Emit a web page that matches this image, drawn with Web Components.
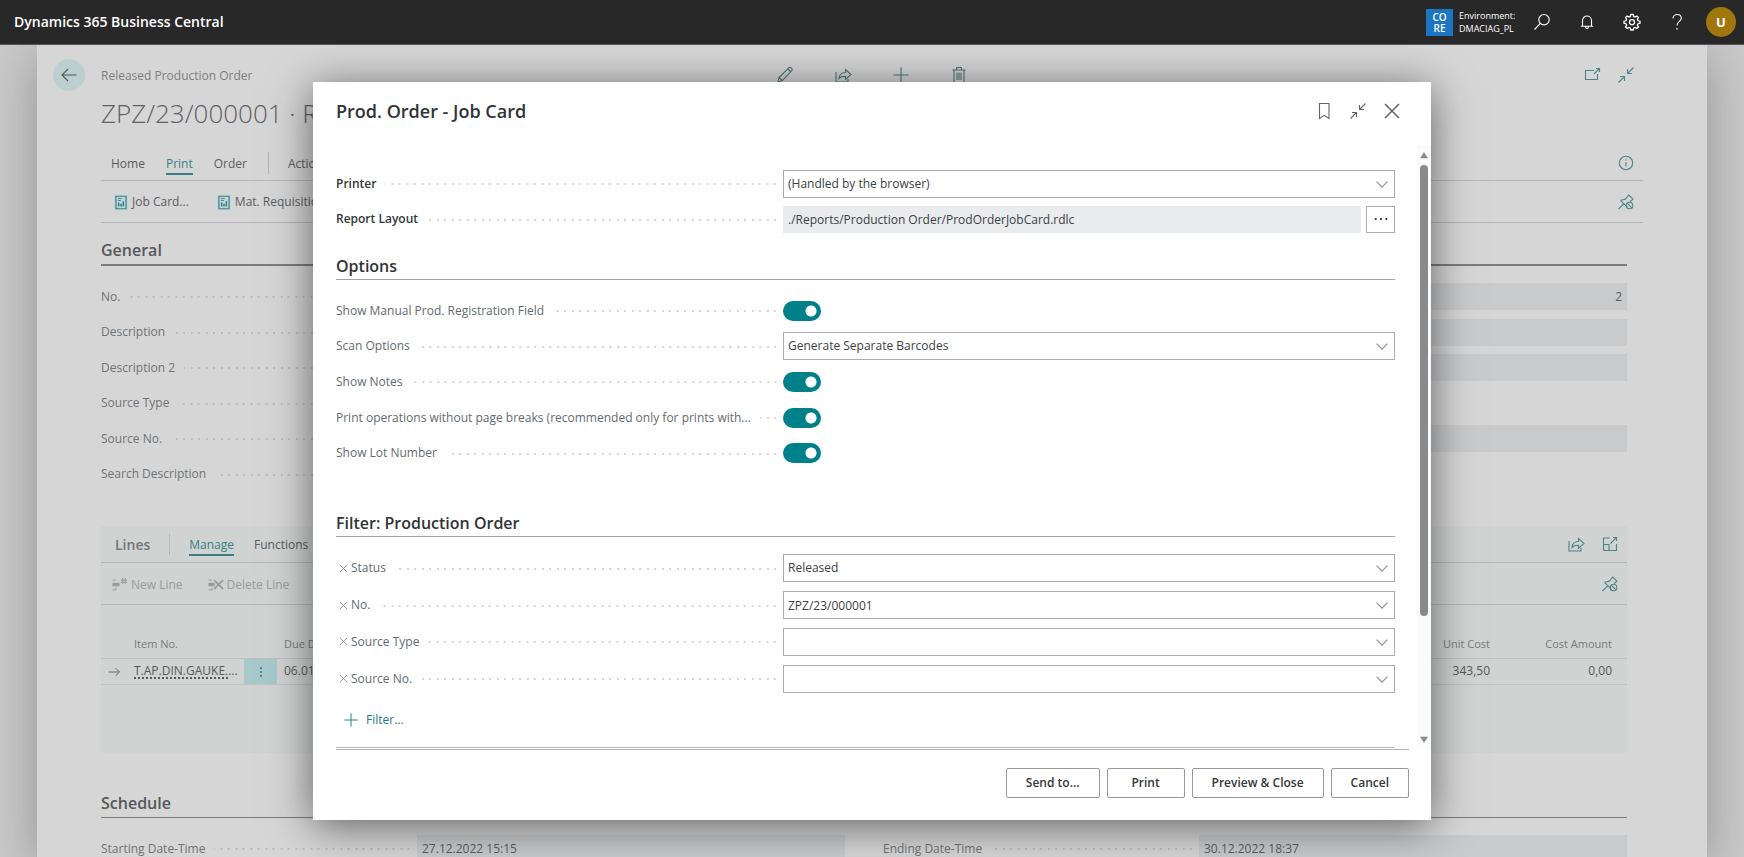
<!DOCTYPE html>
<html lang="en">
<head>
<meta charset="utf-8">
<title>Dynamics 365 Business Central</title>
<style>
html,body{margin:0;height:100%;overflow:hidden}
body{font:12px/18px "Open Sans","Noto Sans",sans-serif;color:#595d5f;background:#cacaca}
</style>
</head>
<body>
<bc-app></bc-app>
<script>
const ICONS = {
  back:'<path d="M16.500 9H2M8 3 2 9l6 6"/>',
  edit:'<path d="M2 16l1-4.500L13 1.700c1.500-1 4 1 3 2.800L6.300 14.600zM3 11.500l3.300 3.100M11.800 3l3.200 3"/>',
  share:'<path d="M2 6v10h12v-3M5 12.500c.3-4 3-6 6.500-6V3.500l5.500 5-5.500 4.800v-3c-3 0-5 .5-6.500 2.200z"/>',
  plus:'<path d="M9 1.500v15M1.500 9h15"/>',
  trash:'<path d="M2.500 4h13M6.500 4V1.500h5V4M4 4v12.500h10V4M7 6.500v7.500M9 6.500v7.500M11 6.500v7.500"/>',
  popout:'<path d="M11 4.500H2.500v9h12V8M11 8l5.500-5.500M13 2.500h3.500V6"/>',
  collapse:'<path d="M16.500 1.500 10.500 7.500M10.500 3v4.500H15M1.500 16.500l6-6M3 10.500h4.500V15"/>',
  info:'<circle cx="9" cy="9" r="6.700"/><path d="M9 8v4.500M9 5.300v1.200"/>',
  unpin:'<path d="M1.500 16 7 10.700M3.500 7.300l7 7M3.500 7.300c2-.8 4-.5 5-1.300l3.300-4 4.200 4.200-3 2.300"/><circle cx="12.500" cy="12.500" r="3.300"/><path d="m10.300 10.300 4.400 4.400"/>',
  expand:'<path d="M9 3H2.500v12.500h13V9M2.500 9.500H8v6M9.500 8.500l6-6M12 2.500h3.500V6"/>',
  search:'<circle cx="11" cy="6.700" r="5.200"/><path d="M7.300 10.400 1.500 16.500"/>',
  bell:'<path d="M4.500 13V7.500a4.500 4.500 0 0 1 9 0V13M2.800 13.200h12.400M7.500 13.500a1.500 2 0 0 0 3 0"/>',
  gear:'<path stroke-width="1.300" d="M7.700 1.500h2.600l.4 2 1.400.6L13.800 3l1.700 1.700-1.100 1.700.6 1.400 2 .4v2.100l-2 .4-.6 1.400 1.100 1.700-1.700 1.700-1.700-1.100-1.400.6-.4 2H7.700l-.4-2-1.400-.6-1.700 1.100-1.700-1.700 1.100-1.700-.6-1.400-2-.4V8.200l2-.4.6-1.400-1.100-1.700L4.200 3l1.700 1.100 1.400-.6z"/><circle cx="9" cy="9.200" r="2.500" stroke-width="1.300"/>',
  help:'<path d="M5 5.500C5 3 6.800 1.500 9.200 1.500S13.300 3 13.300 5.300C13.300 8.500 9 8.500 9 12.500M9 15v1.800"/>',
  bookmark:'<path d="M4.500 1.500h9.500v15L9.200 13.300 4.500 16.500z"/>',
  close:'<path stroke-width="1.500" d="m2 2 14 14M16 2 2 16"/>',
  clear:'<path d="m2 2 14 14M16 2 2 16" stroke-width="1.700"/>',
  chevron:'<path d="m2 6 7 7 7-7" stroke-width="1.600"/>',
  dots:'<path d="M2 9h2M8 9h2M14 9h2" stroke-width="2"/>',
  report:'<path d="M2.500 1h13v16h-13z" stroke-width="1.500"/><path d="M6 14V9M9 14v-3.500M12 14V7.500" stroke-width="2"/><path d="M5 4h5M5 6.500h4"/>',
  newline:'<path d="M1 3.500h4M1 14.500h4M5 12v3" /><path d="M1 8.500h8" stroke-width="4"/><path d="M10.500 3.500h7M10.500 6h7M12.500 1v7M15.500 1v7"/>',
  delline:'<path d="M1 3.500h4M1 14.500h4M5 12v3"/><path d="M1 8.500h7" stroke-width="4"/><path d="m7.500 3.500 10 10M17.500 3.500l-10 10" stroke-width="2"/>',
  arrow:'<path d="M2 9h14M11 4l5 5-5 5"/>',
  more:'<path d="M9 3v2M9 8v2M9 13v2" stroke-width="2"/>',
  up:'<path d="M9 3l7 11H2z" fill="currentColor"/>',
  down:'<path d="M9 15l7-11H2z" fill="currentColor"/>'
};

const BASE = `:host,*{box-sizing:border-box}
button,input,select{font:inherit;color:inherit;margin:0;border-radius:0}
button{background:none;border:0;padding:0}
a{color:inherit;text-decoration:none}
h1,h2,p{margin:0}`;

function define(name, html) {
  const template = document.createElement('template');
  customElements.define(name, class extends HTMLElement {
    connectedCallback() {
      if (this.shadowRoot) return;
      template.innerHTML = typeof html === 'function' ? html(this) : html;
      this.attachShadow({mode:'open'}).append(template.content.cloneNode(true));
    }
  });
}

define('bc-icon', el => `<style>:host{display:inline-block;width:18px;height:18px;flex:none}
svg{display:block;width:100%;height:100%;fill:none;stroke:currentColor;stroke-width:1.100}</style>
<svg viewBox="0 0 18 18" aria-hidden="true">${ICONS[el.getAttribute('name')]}</svg>`);

define('bc-icon-button', el => `<style>${BASE}:host{display:block}button{display:flex;color:inherit}</style>
<button type="button" aria-label="${el.getAttribute('label')}"><bc-icon name="${el.getAttribute('name')}"></bc-icon></button>`);

define('bc-topbar', `<style>${BASE}
:host{display:flex;align-items:center;height:45px;background:#282828;border-bottom:1px solid #555;color:#fff;padding:0 8px 0 14px;position:relative;z-index:3}
.brand{font-size:14px;font-weight:600;margin-right:auto}
.badge{width:27px;height:27px;background:#1c75c2;font-size:10px;line-height:11px;font-weight:600;text-align:center;padding-top:3px;margin-right:6px}
.env{font-size:9px;line-height:13px;width:74px}
.icons{display:flex;gap:27px;margin-right:20px}
.user{width:30px;height:30px;border-radius:50%;background:#a0760d;font-size:13px;font-weight:700;text-align:center}
</style>
<a class="brand" href="#">Dynamics 365 Business Central</a>
<div class="badge">CO<br>RE</div>
<div class="env">Environment:<br>DMACIAG_PL</div>
<div class="icons">
<bc-icon-button name="search" label="Search"></bc-icon-button>
<bc-icon-button name="bell" label="Notifications"></bc-icon-button>
<bc-icon-button name="gear" label="Settings"></bc-icon-button>
<bc-icon-button name="help" label="Help"></bc-icon-button>
</div>
<button class="user" type="button">U</button>`);

const DOTS = `.dots{flex:1;min-width:0;height:3px;margin:2px 6px 0 9px;background:
radial-gradient(circle at 6px 1px,var(--dot) 1px,transparent 1px) right top/15px 3px,
radial-gradient(circle at 13px 1px,var(--dot) 1px,transparent 1px) right top/15px 3px}`;

define('bc-page-field', el => {
  const label = el.getAttribute('label') || '', value = el.getAttribute('value');
  return `<style>${BASE}${DOTS}
:host{display:flex;align-items:center;--dot:#bbbdbe}
.caption{display:flex;align-items:center;width:316px;flex:none;color:#6f7375}
input{flex:1;min-width:0;height:27px;border:0;background:#c8cacc;padding:0 5px;color:#5a5d5f;outline:0}
:host([right]) input{text-align:right}
</style>
<div class="caption">${label ? `<label for="f">${label}</label><span class="dots"></span>` : ''}</div>
${value === null ? '' : `<input id="f" readonly value="${value}" ${label ? '' : 'aria-label="Value"'}>`}`;
});

define('bc-section', el => `<style>${BASE}
:host{display:block}
h2{height:var(--head,30px);font-size:16px;line-height:28px;font-weight:600;color:var(--head-ink,#54585a);border-bottom:var(--rule,2px solid #787d82)}
</style><h2>${el.getAttribute('heading')}</h2><slot></slot>`);

define('bc-lines', `<style>${BASE}
:host{display:block;background:#d0d3d2;padding-bottom:68px}
.bar{display:flex;align-items:center;border-bottom:1px solid #b3b8ba;padding-right:8px}
.head{height:37px;padding-left:14px}
.head h2{font-size:14px;font-weight:600;color:#74797a;padding-right:19px;margin-right:19px;line-height:21px;border-right:1px solid #b3b8ba}
.head a{margin-right:20px;padding-top:3px;border-bottom:2px solid transparent}
.head .on{color:#358084;border-bottom-color:#358084}
.acts{height:42px;padding-left:10px;color:#999c9c}
.acts button{display:flex;gap:3px;align-items:center;margin-right:24px;padding-top:2px}
.acts bc-icon{width:17px;height:16px}
.end{margin-left:auto;display:flex;gap:16px;color:#4d8487}
table{width:100%;border-collapse:collapse;table-layout:fixed}
th{height:53px;vertical-align:bottom;padding:0 0 5px;text-align:left;font-weight:400;font-size:11px;color:#777b7c;border-bottom:1px solid #bcc0c1}
td{height:26px;padding:0;border-bottom:1px solid #c0c4c4;color:#55595a;white-space:nowrap}
.n{text-align:right;padding-right:15px}
td.c{text-align:center}
td.m{background:#a7c9cb}
td bc-icon{width:14px;height:14px;vertical-align:middle}
td a{text-decoration:underline dotted 2px;text-underline-offset:2px}
.due{padding-left:7px}
</style>
<div class="bar head"><h2>Lines</h2><a class="on" href="#">Manage</a><a href="#">Functions</a>
<span class="end"><bc-icon-button name="share" label="Share"></bc-icon-button><bc-icon-button name="expand" label="Expand"></bc-icon-button></span></div>
<div class="bar acts"><button type="button" disabled><bc-icon name="newline"></bc-icon>New Line</button><button type="button" disabled><bc-icon name="delline"></bc-icon>Delete Line</button>
<span class="end"><bc-icon-button name="unpin" label="Unpin"></bc-icon-button></span></div>
<table><colgroup><col style="width:33px"><col style="width:110px"><col style="width:33px"><col style="width:120px"><col><col style="width:110px"><col style="width:122px"></colgroup>
<thead><tr><th></th><th>Item No.</th><th></th><th class="due">Due Date</th><th></th><th class="n">Unit Cost</th><th class="n">Cost Amount</th></tr></thead>
<tbody><tr><td><bc-icon name="arrow" style="margin-left:6px"></bc-icon></td><td><a href="#">T.AP.DIN.GAUKE.</a>...</td><td class="c m"><bc-icon name="more"></bc-icon></td><td class="due">06.01.2023</td><td></td><td class="n">343,50</td><td class="n">0,00</td></tr></tbody></table>`);

define('bc-order-page', `<style>${BASE}
:host{display:block;height:100%;margin:0 37px;padding:13px 64px 0;background:#d6d6d6;box-shadow:0 10px 50px rgba(0,0,0,.28);overflow:hidden}
.top{display:grid;grid-template-columns:675fr 867fr;height:34px;align-items:center}
.crumb{display:flex;align-items:center;gap:16px;margin-left:-48px;color:#7b7f81}
.crumb span{padding-top:2px}
.back{width:32px;height:32px;border-radius:50%;background:#bccfd0;display:flex;align-items:center;justify-content:center;color:#555}
.tools{display:flex;gap:40px;color:#4d7578}
.end{margin-left:auto;display:flex;gap:16px;padding-right:8px;color:#4d8487}
h1{font-size:26px;line-height:42px;font-weight:300;color:#5d6163}
.bar{display:flex;align-items:center;border-bottom:1px solid #b5b8ba}
.tabs{height:35px;margin-top:12px;padding-left:10px}
.tabs a{margin-right:21px;padding-top:3px;border-bottom:2px solid transparent}
.tabs .on{color:#358084;border-bottom-color:#358084}
.tabs i{width:1px;height:22px;background:#b3b6b8;margin-right:19px}
.acts{height:42px;padding-left:13px}
.acts button{display:flex;gap:4px;align-items:center;margin-right:28px;padding-top:1px}
.acts button bc-icon{width:14px;height:15px;color:#358084;background:#c3d6d7}
bc-section,bc-lines{margin-right:16px}
.general{margin-top:13px}
.cols{display:grid;grid-template-columns:1fr 1fr;column-gap:38px;margin-top:13px}
.six{grid-template-rows:repeat(6,1fr);height:213px;grid-auto-flow:column}
bc-lines{margin-top:34px}
.sched{margin-top:36px;--head:29px;--rule:1px solid #787d82}
.one bc-page-field{height:36px}
</style>
<div class="top"><div class="crumb"><button class="back" type="button" aria-label="Back"><bc-icon name="back"></bc-icon></button><span>Released Production Order</span></div>
<div class="tools"><bc-icon-button name="edit" label="Edit"></bc-icon-button><bc-icon-button name="share" label="Share"></bc-icon-button><bc-icon-button name="plus" label="New"></bc-icon-button><bc-icon-button name="trash" label="Delete"></bc-icon-button>
<span class="end"><bc-icon-button name="popout" label="Open in new window"></bc-icon-button><bc-icon-button name="collapse" label="Collapse"></bc-icon-button></span></div></div>
<h1>ZPZ/23/000001 · R</h1>
<nav class="bar tabs"><a href="#">Home</a><a class="on" href="#">Print</a><a href="#">Order</a><i></i><a href="#">Actions</a><span class="end"><bc-icon-button name="info" label="Details"></bc-icon-button></span></nav>
<div class="bar acts"><button type="button"><bc-icon name="report"></bc-icon>Job Card...</button><button type="button"><bc-icon name="report"></bc-icon>Mat. Requisition...</button><span class="end"><bc-icon-button name="unpin" label="Unpin"></bc-icon-button></span></div>
<bc-section class="general" heading="General"><div class="cols six">
<bc-page-field label="No." value=""></bc-page-field><bc-page-field label="Description" value=""></bc-page-field><bc-page-field label="Description 2" value=""></bc-page-field><bc-page-field label="Source Type" value=""></bc-page-field><bc-page-field label="Source No." value=""></bc-page-field><bc-page-field label="Search Description" value=""></bc-page-field>
<bc-page-field right value="2"></bc-page-field><bc-page-field value=""></bc-page-field><bc-page-field value=""></bc-page-field><bc-page-field></bc-page-field><bc-page-field value=""></bc-page-field><bc-page-field></bc-page-field>
</div></bc-section>
<bc-lines></bc-lines>
<bc-section class="sched" heading="Schedule"><div class="cols one"><bc-page-field label="Starting Date-Time" value="27.12.2022 15:15"></bc-page-field><bc-page-field label="Ending Date-Time" value="30.12.2022 18:37"></bc-page-field></div></bc-section>`);

define('bc-dialog-field', el => {
  const a = n => el.getAttribute(n) || '', kind = a('kind'), v = a('value');
  const control = {
    select:`<span class="box"><select id="f"><option>${v}</option></select><bc-icon name="chevron"></bc-icon></span>`,
    lookup:`<span class="box"><input id="f" type="text" value="${v}"><bc-icon name="chevron"></bc-icon></span>`,
    layout:`<input id="f" class="ro" readonly value="${v}"><button class="pick" type="button" aria-label="Choose layout"><bc-icon name="dots"></bc-icon></button>`,
    toggle:`<input id="f" type="checkbox" role="switch" checked>`
  }[kind];
  return `<style>${BASE}${DOTS}
:host{display:flex;align-items:center;--dot:#d3d5d6}
.caption{display:flex;align-items:center;width:447px;flex:none;color:#636b6f}
label{white-space:nowrap}
:host([strong]) label{font-weight:600;color:#33383a}
.clear{display:flex;margin:0 3px;color:#83898c}.clear bc-icon{width:9px;height:9px}
.box{display:grid;flex:1;height:28px;align-items:center;color:#3c4143}
.box>*{grid-area:1/1}
.box select,.box input{appearance:none;width:100%;height:28px;border:1px solid #a9aeb3;background:#fff;padding:0 4px;outline:0}
.box bc-icon{width:14px;height:14px;justify-self:end;margin-right:6px;color:#8f9497;pointer-events:none}
.ro{flex:1;height:27px;border:0;background:#e9ebed;padding:0 5px;color:#3c4143;outline:0}
.pick{width:29px;height:27px;border:1px solid #a9aeb3;margin-left:5px;display:grid;place-items:center;color:#333}
.pick bc-icon{width:16px;height:16px}
[type=checkbox]{appearance:none;width:38px;height:20px;border-radius:10px;background:radial-gradient(circle at 28px 10px,#fff 5px,#008089 6px)}
</style>
<div class="caption">${el.hasAttribute('clearable') ? '<button class="clear" type="button" aria-label="Remove filter"><bc-icon name="clear"></bc-icon></button>' : ''}<label for="f">${a('label')}</label><span class="dots"></span></div>${control}`;
});

define('bc-scrollbar', `<style>:host{display:flex;flex-direction:column;align-items:center;width:14px;background:#fbfbfb;color:#8a8a8a}
bc-icon{width:10px;height:9px;margin:6px 0 5px}.track{flex:1;width:8px}.thumb{height:80%;background:#8a8a8a;border-radius:4px}</style>
<bc-icon name="up"></bc-icon><div class="track"><div class="thumb"></div></div><bc-icon name="down"></bc-icon>`);

define('bc-dialog', `<style>${BASE}
:host{display:flex;flex-direction:column;width:1118px;max-width:100%;height:calc(100% - 74px);background:#fff;box-shadow:0 6px 40px rgba(0,0,0,.55);padding-left:23px;--head-ink:#2f3436;--rule:1px solid #a0a5aa;--head:28px}
header{display:flex;align-items:center;height:58px;padding-right:30px;color:#606466;margin-bottom:5px}
header h1{font-size:18px;font-weight:600;color:#2f3436;margin-right:auto}
header div{display:flex;gap:16px}
.scroll{flex:1;min-height:0;display:flex}
.body{flex:1;min-width:0;overflow:hidden;margin-right:22px;padding-top:21px}
.rows{display:grid;grid-auto-rows:1fr}
.lead{height:71px}
.options{margin-top:15px}
.options .rows{height:178px;margin-top:13px}
.filters{margin-top:38px}
.filters .rows{height:147px;margin-top:13px}
.add{display:flex;align-items:center;gap:7px;color:#2a7b80;margin:14px 0 0 7px;height:18px}
.add bc-icon{width:16px;height:16px}
.end{border-top:1px solid #bbb;margin-top:18px}
footer{display:flex;justify-content:flex-end;gap:7px;border-top:1px solid #b4b4b4;margin-right:22px;padding:18px 0 22px}
footer button{height:30px;border:1px solid #999;border-radius:2px;padding:0 19px;min-width:78px;font-weight:600;color:#33383a}
</style>
<header><h1>Prod. Order - Job Card</h1><div><bc-icon-button name="bookmark" label="Bookmark"></bc-icon-button><bc-icon-button name="collapse" label="Collapse"></bc-icon-button><bc-icon-button name="close" label="Close"></bc-icon-button></div></header>
<div class="scroll"><div class="body">
<div class="rows lead"><bc-dialog-field strong kind="select" label="Printer" value="(Handled by the browser)"></bc-dialog-field><bc-dialog-field strong kind="layout" label="Report Layout" value="./Reports/Production Order/ProdOrderJobCard.rdlc"></bc-dialog-field></div>
<bc-section class="options" heading="Options"><div class="rows">
<bc-dialog-field kind="toggle" label="Show Manual Prod. Registration Field"></bc-dialog-field>
<bc-dialog-field kind="select" label="Scan Options" value="Generate Separate Barcodes"></bc-dialog-field>
<bc-dialog-field kind="toggle" label="Show Notes"></bc-dialog-field>
<bc-dialog-field kind="toggle" label="Print operations without page breaks (recommended only for prints with..."></bc-dialog-field>
<bc-dialog-field kind="toggle" label="Show Lot Number"></bc-dialog-field></div></bc-section>
<bc-section class="filters" heading="Filter: Production Order"><div class="rows">
<bc-dialog-field clearable kind="select" label="Status" value="Released"></bc-dialog-field>
<bc-dialog-field clearable kind="lookup" label="No." value="ZPZ/23/000001"></bc-dialog-field>
<bc-dialog-field clearable kind="select" label="Source Type"></bc-dialog-field>
<bc-dialog-field clearable kind="lookup" label="Source No."></bc-dialog-field></div>
<button class="add" type="button"><bc-icon name="plus"></bc-icon>Filter...</button></bc-section>
<div class="end"></div>
</div><bc-scrollbar></bc-scrollbar></div>
<footer><button type="button">Send to...</button><button type="button">Print</button><button type="button">Preview &amp; Close</button><button type="button">Cancel</button></footer>`);

define('bc-app', `<style>:host{display:grid;grid-template-rows:auto minmax(0,1fr);height:100vh}
main{position:relative;min-height:0}
.veil{position:absolute;inset:0;display:grid;place-items:center}</style>
<bc-topbar></bc-topbar><main><bc-order-page></bc-order-page><div class="veil"><bc-dialog role="dialog" aria-label="Prod. Order - Job Card"></bc-dialog></div></main>`);
</script>
</body>
</html>
